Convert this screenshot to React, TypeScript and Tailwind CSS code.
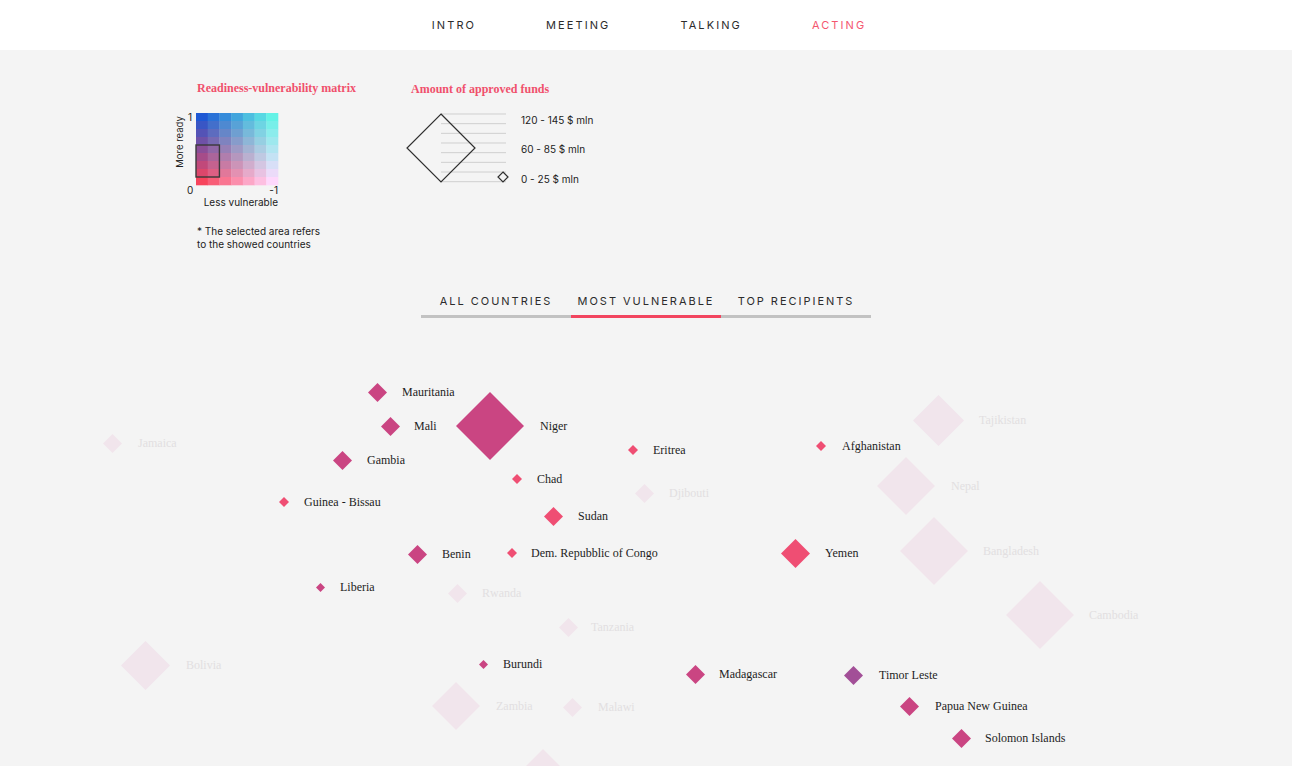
import React from "react";

type Tone = "m" | "r" | "p" | "f";

interface Country {
  name: string;
  x: number;
  y: number;
  r: number;
  tone: Tone;
  lx: number;
  hideLabel?: boolean;
}

const MAP_TOP = 320;

const fill: Record<Tone, string> = {
  m: "#ca4582",
  r: "#ef4e73",
  p: "#a24f97",
  f: "#f1e5ec",
};

const countries: Country[] = [
  // faded ones first so they sit behind
  { name: "Jamaica", x: 112, y: 443, r: 9.5, tone: "f", lx: 138 },
  { name: "Djibouti", x: 644, y: 493, r: 9.5, tone: "f", lx: 669 },
  { name: "Tajikistan", x: 938, y: 420, r: 25.5, tone: "f", lx: 979 },
  { name: "Nepal", x: 906, y: 486, r: 29, tone: "f", lx: 951 },
  { name: "Bangladesh", x: 934, y: 551, r: 34, tone: "f", lx: 983 },
  { name: "Cambodia", x: 1040, y: 615, r: 34, tone: "f", lx: 1089 },
  { name: "Rwanda", x: 457, y: 593, r: 9.5, tone: "f", lx: 482 },
  { name: "Tanzania", x: 568, y: 627, r: 9.5, tone: "f", lx: 591 },
  { name: "Bolivia", x: 145, y: 665, r: 24.5, tone: "f", lx: 186 },
  { name: "Zambia", x: 456, y: 706, r: 24, tone: "f", lx: 496 },
  { name: "Malawi", x: 572, y: 707, r: 9.5, tone: "f", lx: 598 },
  { name: "Chile", x: 543, y: 773, r: 24, tone: "f", lx: 583, hideLabel: true },
  { name: "Mauritania", x: 377, y: 392, r: 9.5, tone: "m", lx: 402 },
  { name: "Mali", x: 390, y: 426, r: 9.5, tone: "m", lx: 414 },
  { name: "Niger", x: 490, y: 426, r: 34, tone: "m", lx: 540 },
  { name: "Gambia", x: 342, y: 460, r: 9.5, tone: "m", lx: 367 },
  { name: "Guinea - Bissau", x: 284, y: 502, r: 5, tone: "r", lx: 304 },
  { name: "Chad", x: 517, y: 479, r: 5, tone: "r", lx: 537 },
  { name: "Eritrea", x: 633, y: 450, r: 5, tone: "r", lx: 653 },
  { name: "Afghanistan", x: 821, y: 446, r: 5, tone: "r", lx: 842 },
  { name: "Sudan", x: 553, y: 516, r: 9.5, tone: "r", lx: 578 },
  { name: "Benin", x: 417, y: 554, r: 9.5, tone: "m", lx: 442 },
  { name: "Dem. Repubblic of Congo", x: 512, y: 553, r: 5, tone: "r", lx: 531 },
  { name: "Yemen", x: 795, y: 553, r: 14.5, tone: "r", lx: 825 },
  { name: "Liberia", x: 320, y: 587, r: 4.5, tone: "m", lx: 340 },
  { name: "Burundi", x: 483, y: 664, r: 4.5, tone: "m", lx: 503 },
  { name: "Madagascar", x: 695, y: 674, r: 9.5, tone: "m", lx: 719 },
  { name: "Timor Leste", x: 853, y: 675, r: 9.5, tone: "p", lx: 879 },
  { name: "Papua New Guinea", x: 909, y: 706, r: 9.5, tone: "m", lx: 935 },
  { name: "Solomon Islands", x: 961, y: 738, r: 9.5, tone: "m", lx: 985 },
];

const navItems = ["INTRO", "MEETING", "TALKING", "ACTING"];
const tabs = ["ALL COUNTRIES", "MOST VULNERABLE", "TOP RECIPIENTS"];

// corners of the matrix: top-left, top-right, bottom-left, bottom-right
const TL = [30, 88, 212];
const TR = [100, 242, 230];
const BL = [247, 68, 92];
const BR = [254, 216, 252];

const mix = (a: number[], b: number[], t: number) => a.map((v, i) => v + (b[i] - v) * t);

const cellColor = (col: number, row: number) => {
  const top = mix(TL, TR, col / 6);
  const bottom = mix(BL, BR, col / 6);
  const c = mix(top, bottom, row / 8).map((v) => Math.round(v));
  return `rgb(${c[0]},${c[1]},${c[2]})`;
};

const Matrix = () => {
  const cw = 82 / 7;
  const ch = 8;
  const cells = [];
  for (let row = 0; row < 9; row++) {
    for (let col = 0; col < 7; col++) {
      cells.push(
        <rect
          key={`${row}-${col}`}
          x={26 + col * cw}
          y={5 + row * ch}
          width={cw + 0.3}
          height={ch + 0.3}
          fill={cellColor(col, row)}
        />
      );
    }
  }
  return (
    <svg width="115" height="102" className="block" style={{ fontFamily: "Inter, sans-serif" }}>
      {cells}
      <rect x={26} y={37} width={cw * 2} height={32} fill="none" stroke="#3a3a3a" strokeWidth="1.4" />
      <text x="18" y="13" fontSize="10" fill="#222">1</text>
      <text x="17" y="86" fontSize="10" fill="#222">0</text>
      <text x="108" y="86" fontSize="10" fill="#222" textAnchor="end">-1</text>
      <text x="108" y="98" fontSize="10" fill="#222" textAnchor="end">Less vulnerable</text>
      <text x="0" y="0" fontSize="9.5" fill="#222" textAnchor="middle" transform="translate(13 34) rotate(-90)">
        More ready
      </text>
    </svg>
  );
};

const Funds = () => {
  const lines = Array.from({ length: 8 }, (_, i) => 9 + i * 9.67);
  return (
    <svg width="210" height="85" className="block" style={{ fontFamily: "Inter, sans-serif" }}>
      {lines.map((y) => (
        <line key={y} x1="41" x2="106" y1={y} y2={y} stroke="#cfcfcf" strokeWidth="1" />
      ))}
      <polygon points="41,9 75,43 41,77 7,43" fill="none" stroke="#2f2f2f" strokeWidth="1.2" />
      <polygon points="103,67 108,72 103,77 98,72" fill="#f4f4f4" stroke="#2f2f2f" strokeWidth="1.2" />
      <text x="121" y="19" fontSize="10" fill="#222">120 - 145 $ mln</text>
      <text x="121" y="48" fontSize="10" fill="#222">60 - 85 $ mln</text>
      <text x="121" y="78" fontSize="10" fill="#222">0 - 25 $ mln</text>
    </svg>
  );
};

const Diamond = ({ c }: { c: Country }) => {
  const s = c.r * 2;
  return (
    <>
      <svg
        className="absolute"
        width={s}
        height={s}
        style={{ left: c.x - c.r, top: c.y - MAP_TOP - c.r }}
      >
        <polygon points={`${c.r},0 ${s},${c.r} ${c.r},${s} 0,${c.r}`} fill={fill[c.tone]} />
      </svg>
      {!c.hideLabel && (
        <span
          className={`absolute -translate-y-1/2 whitespace-nowrap text-[12px] leading-none ${
            c.tone === "f" ? "text-[#e2dfe1]" : "text-[#1d1d1d]"
          }`}
          style={{ left: c.lx, top: c.y - MAP_TOP }}
        >
          {c.name}
        </span>
      )}
    </>
  );
};

export default function App() {
  return (
    <div className="h-[766px] w-[1292px] overflow-hidden bg-[#f4f4f4] font-['Inter',sans-serif]">
      <nav className="flex h-[50px] items-center justify-center gap-[70px] bg-white pl-[6px]">
        {navItems.map((item) => (
          <span
            key={item}
            className={`text-[11px] tracking-[0.19em] ${
              item === "ACTING" ? "text-[#f4566f]" : "text-[#2c2c2c]"
            }`}
          >
            {item}
          </span>
        ))}
      </nav>

      <section className="flex pl-[170px] pt-[31px]">
        <div className="w-[230px]">
          <h3 className="ml-[27px] font-['Liberation_Serif',serif] text-[12px] font-bold leading-[14px] text-[#f0506c]">
            Readiness-vulnerability matrix
          </h3>
          <div className="mt-[13px]">
            <Matrix />
          </div>
          <p className="ml-[27px] mt-[15px] text-[10px] leading-[13px] text-[#222]">
            * The selected area refers
            <br />
            to the showed countries
          </p>
        </div>
        <div>
          <h3 className="ml-[11px] mt-[1px] font-['Liberation_Serif',serif] text-[12px] font-bold leading-[14px] text-[#f0506c]">
            Amount of approved funds
          </h3>
          <div className="mt-[9px]">
            <Funds />
          </div>
        </div>
      </section>

      <div className="mt-[42px] flex justify-center">
        {tabs.map((tab) => (
          <div
            key={tab}
            className={`w-[150px] border-b-[3px] pb-[6px] text-center text-[11px] leading-[16px] tracking-[0.18em] text-[#2c2c2c] ${
              tab === "MOST VULNERABLE" ? "border-[#f2455f]" : "border-[#c2c2c2]"
            }`}
          >
            {tab}
          </div>
        ))}
      </div>

      <div className="relative mt-[2px] h-[446px] font-['Liberation_Serif',serif]">
        {countries.map((c) => (
          <Diamond key={c.name} c={c} />
        ))}
      </div>
    </div>
  );
}
